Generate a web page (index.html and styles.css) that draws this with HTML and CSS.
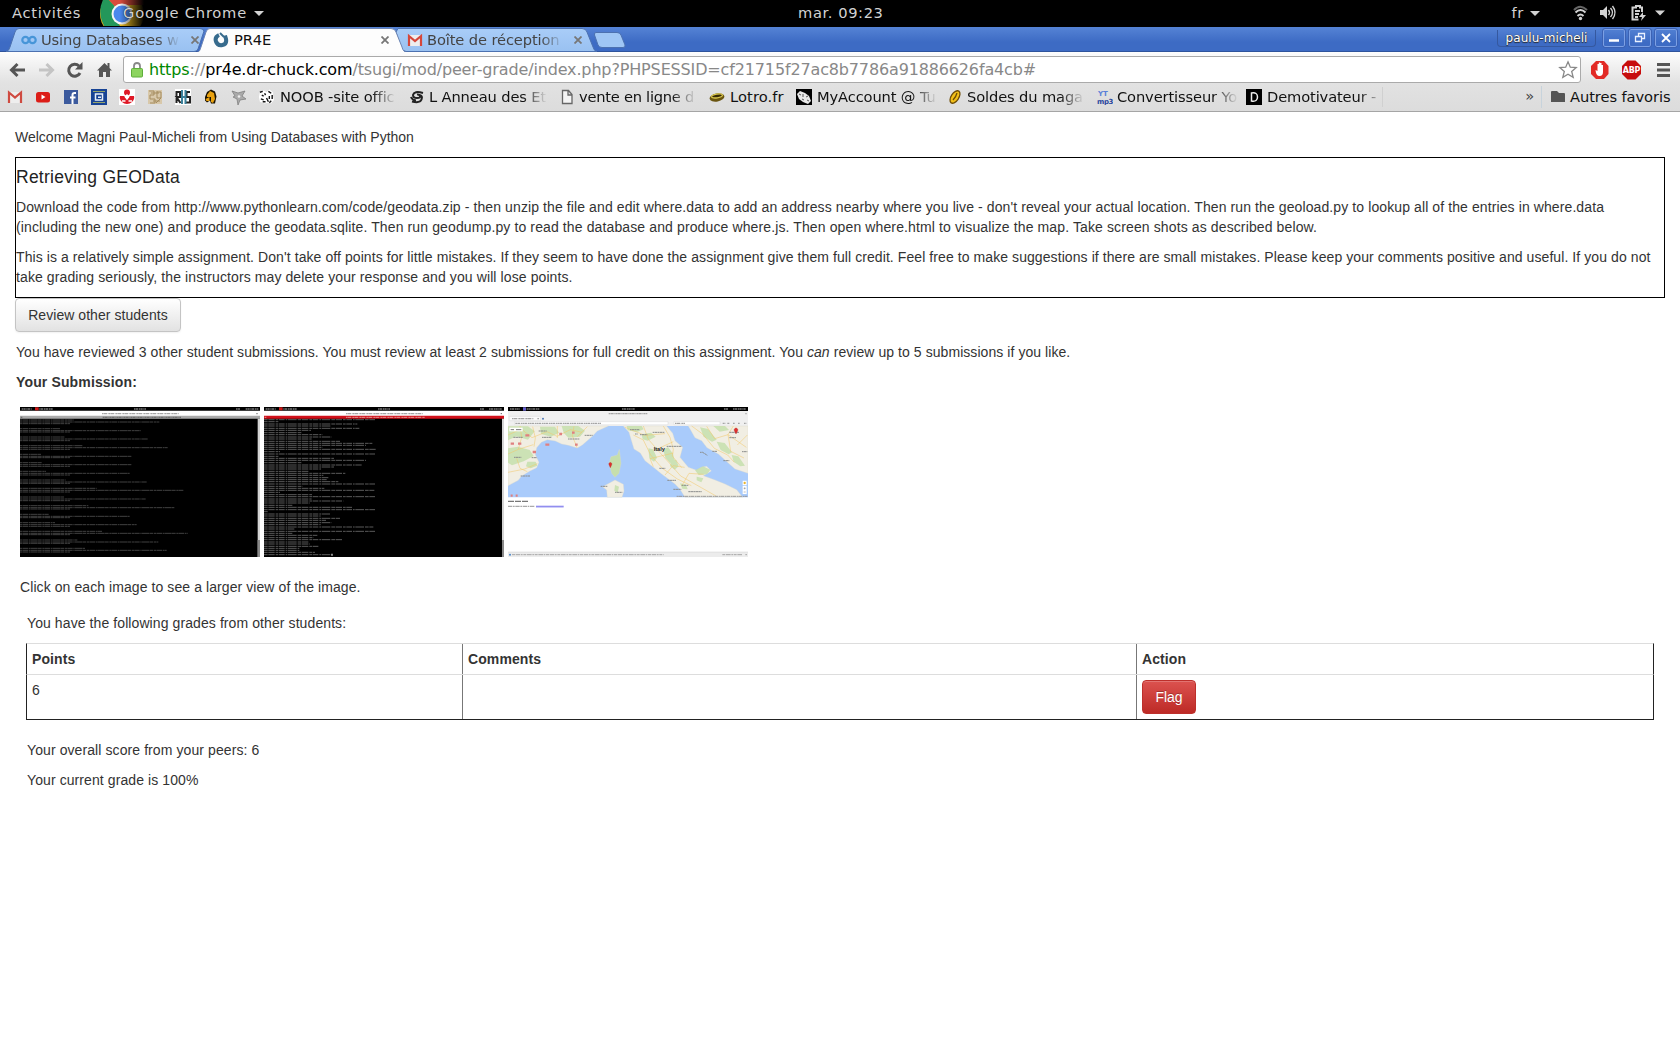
FILE: index.html
```html
<!DOCTYPE html>
<html lang="fr">
<head>
<meta charset="utf-8">
<title>PR4E</title>
<link rel="stylesheet" href="styles.css">
</head>
<body>
<header class="shell">
  <span class="act">Activités</span>
  <svg class="app-logo" width="44" height="26" viewBox="0 0 44 26"><defs><linearGradient id="fd"><stop offset=".45" stop-color="#000" stop-opacity="0"/><stop offset="1" stop-color="#000"/></linearGradient></defs><circle cx="22" cy="14" r="22" fill="#e8b820"/><path d="M22 14L5-4H44V5H22z" fill="#d94b3d"/><path d="M22 14L5-4Q-5 12 6 29H22L15 18z" fill="#23975a"/><circle cx="22" cy="14" r="10.500" fill="#f5f5f5"/><circle cx="22" cy="14" r="8.500" fill="#4b88ee"/><rect width="44" height="26" fill="url(#fd)"/></svg>
  <span class="app">Google Chrome</span><i class="tri"></i>
  <span class="clock">mar. 09:23</span>
  <span class="lang">fr</span><i class="tri"></i>
  <svg class="status" width="98" height="18" viewBox="0 0 98 18" fill="none" stroke="#d3d3d3" stroke-width="2"><path d="M2 6Q8-.5 15 6" stroke="#666"/><path d="M3.500 8.500Q8.500 3.500 13.500 8.500M5.500 12Q8.500 9 11.500 12"/><circle cx="8.500" cy="14.500" r="1.700" fill="#d3d3d3" stroke="none"/><path d="M28 6h3l4-4v13l-4-4h-3z" fill="#d3d3d3" stroke="none"/><path d="M36.500 6q2 2.500 0 5M38.500 4q4 4.500 0 9M40.500 2q5 6.500 0 13" stroke-width="1.400"/><path d="M70 8V3.500h-2V2h-4v1.500h-3.500v12h6M63 7h5M63 10h4M63 13h3"/><path d="M71 8l-4 5h3l-1 4 5-6h-3z" fill="#d3d3d3" stroke="none"/><path d="M83 6.500h10l-5 5z" fill="#d3d3d3" stroke="none"/></svg>
</header>

<nav class="tabs">
  <svg class="tab-shapes" width="640" height="25" viewBox="0 0 640 25"><defs><linearGradient id="tb" x2="0" y2="1"><stop stop-color="#a9cdf8"/><stop offset="1" stop-color="#99c1f1"/></linearGradient></defs>
    <path d="M6 24.500Q9 24 10 20L15 5Q16 1.500 19 1.500H200Q203 1.500 204 4L198 22Q197 24.500 194 24.500z" fill="url(#tb)" stroke="#4c71b0"/>
    <path d="M398 1.500H582Q586 1.500 587 5L593 20Q594 24 597 24.500H406Q402 24 401 20L396 5z" fill="url(#tb)" stroke="#4c71b0"/>
    <path d="M596 5.500H617Q620 5.500 621 8L625 18Q625.500 20.500 623 20.500H602Q599 20.500 598 18L594.500 8Q594 5.500 596 5.500z" fill="#9fc6f5" stroke="#4c71b0"/>
    <path d="M197 25.500Q200 25 201 20L206 5Q207 1.500 210 1.500H391Q395 1.500 396 5L402 20Q403 25 407 25.500z" fill="#fdfdfd" stroke="#6d86b5"/></svg>
  <div class="tab tab-a"><svg width="16" height="16" viewBox="0 0 16 16" fill="none" stroke="#4795d8" stroke-width="2.200"><circle cx="4.500" cy="8" r="3.200"/><circle cx="11.500" cy="8" r="3.200"/></svg><span class="fade">Using Databases w</span><svg class="x" width="8" height="8" viewBox="0 0 8 8"><path d="M.5.500l7 7M7.500.500l-7 7"/></svg></div>
  <div class="tab tab-b"><svg width="16" height="16" viewBox="0 0 16 16" fill="none" stroke="#376b8d" stroke-width="4"><path d="M6 3Q1.500 5 3 9.500t6.500 3.500Q14 12 13 7l-1-3.500"/><path d="M7 1l4 4" stroke-width="2"/></svg><span class="name">PR4E</span><svg class="x" width="8" height="8" viewBox="0 0 8 8"><path d="M.5.500l7 7M7.500.500l-7 7"/></svg></div>
  <div class="tab tab-c"><svg width="16" height="16" viewBox="0 0 16 16"><path d="M1 3h14v11H1z" fill="#eee"/><path d="M2 14V4l6 5 6-5v10" fill="none" stroke="#d5473b" stroke-width="2.200"/></svg><span class="fade">Boîte de réception</span><svg class="x" width="8" height="8" viewBox="0 0 8 8"><path d="M.5.500l7 7M7.500.500l-7 7"/></svg></div>
  <div class="user">paulu-micheli</div>
  <div class="win"><svg width="20" height="16" viewBox="0 0 20 16"><path d="M5 10.500h10" stroke="#fff" stroke-width="2.500"/></svg></div>
  <div class="win"><svg width="20" height="16" viewBox="0 0 20 16" fill="none" stroke="#eaf1ff" stroke-width="1.300"><path d="M5.500 6.500h6v5h-6zM8.500 6V3.500h6v5H12"/></svg></div>
  <div class="win"><svg width="20" height="16" viewBox="0 0 20 16" stroke="#fff" stroke-width="1.800"><path d="M6 4l8 8M14 4l-8 8"/></svg></div>
</nav>

<div class="chrome">
<div class="toolbar">
  <svg class="nav" width="112" height="20" viewBox="0 0 112 20" fill="none" stroke="#555" stroke-width="3"><path d="M25 10H12M17.500 4l-6 6 6 6"/><path d="M39 10h13M46.500 4l6 6-6 6" stroke="#c4c4c4"/><path d="M80 13A6 6 0 1 1 79 6"/><path d="M82.500 2v7.500H75z" fill="#555" stroke="none"/><path d="M97 10.500l7.500-7.500 3 3V3h2v5l2.500 2.500h-2V17h-4v-5h-3v5h-4v-6.500z" fill="#555" stroke="none"/></svg>
  <div class="url"><svg width="14" height="18" viewBox="0 0 14 18"><path d="M4 8V5q0-3 3-3t3 3v3" fill="none" stroke="#888" stroke-width="1.800"/><rect x="1.500" y="7.500" width="11" height="8.500" rx="1" fill="#8cd45f" stroke="#5fae3b"/></svg><span class="addr"><em>https</em>://<strong>pr4e.dr-chuck.com</strong>/tsugi/mod/peer-grade/index.php?PHPSESSID=cf21715f27ac8b7786a91886626fa4cb#</span>
  <svg class="star" width="20" height="20" viewBox="0 0 20 20"><path d="M10 1.800l2.300 5.400 5.900.4-4.500 3.800 1.500 5.900L10 14.200l-5.200 3.100 1.500-5.900L1.800 7.600l5.900-.4z" fill="#fff" stroke="#888" stroke-width="1.300"/></svg></div>
  <svg class="ext" width="90" height="22" viewBox="0 0 90 22"><path d="M6 2h8l4.500 5v8l-4.500 5H6l-5-5V7z" fill="#e22b26"/><path d="M5.500 11l2 1V5h1.300v5V3.500h1.400V10V4h1.300v6.500V6H13v7q0 4-3.500 4T5.500 11z" fill="#fff"/><path d="M37.500 1.500h8l5.500 5.500v8l-5.500 5.500h-8L32 15V7z" fill="#c70d0d"/><text x="41.500" y="14" text-anchor="middle" class="abp">ABP</text><path d="M67 5.500h13M67 11h13M67 16.500h13" stroke="#555" stroke-width="3"/></svg>
</div>

<div class="marks">
  <svg class="favs" width="258" height="18" viewBox="0 0 258 18"><path d="M8 4h14v11H8z" fill="#eee"/><path d="M9 15V4.500l6 5 6-5V15" fill="none" stroke="#cf4a40" stroke-width="2.200"/><rect x="36" y="4" width="14" height="10.500" rx="2.500" fill="#dc1d17"/><path d="M41.500 6.500v5l4-2.500z" fill="#fff"/><rect x="64" y="2" width="14" height="14" fill="#3c5a9d"/><path d="M76 5h-1.500q-2 0-2 2v9M70 9.500h5.500" fill="none" stroke="#fff" stroke-width="2"/><rect x="91" y="1" width="16" height="16" fill="#174394"/><path d="M93 3.500h12M93 14.500h12" stroke="#96a56d"/><path d="M95.500 6h7v6h-7z" fill="none" stroke="#e8eff8" stroke-width="1.500"/><path d="M98 8.500h3v1.500h-3z" fill="#e8eff8"/><rect x="119" y="1" width="16" height="16" fill="#fff"/><circle cx="127" cy="4.500" r="3" fill="#df1826"/><path d="M120 8h4l3 3 3-3h4q1 3-2 6-2 2-5 2t-5-2q-3-3-2-6z" fill="#df1826"/><path d="M127 7l1.500 2-1.500 2-1.500-2zM122 13h3.500M128.500 13h3.500" fill="#fff" stroke="#fff" stroke-width="1.400"/><rect x="148" y="2" width="14" height="14" fill="#d8c8aa"/><path d="M149 3h5v4h-4v4h5v4h-5M157 3v7h4M156 15l5-5M157 4h4v6M151 5h8M153 13h7" fill="none" stroke="#a58c5f"/><rect x="175" y="1" width="16" height="16" fill="#fff"/><path d="M176.500 15V4h3.500v5h-3.500l4 6M190 4h-3.500v5h3.500v5.500h-4" fill="none" stroke="#222" stroke-width="2"/><path d="M182 2v14M185.500 2v14M181 9h5" stroke="#3b819b" stroke-width="2"/><path d="M205 9l2-5 4-2.500 4 2 1.500 5-1.500 7h-4l-1-3-3 2-2-2z" fill="#1a1200"/><path d="M207 7l3-4 4 2 1 6-2 4-2-1v-5h-4zM205.500 11l4-2v4h-3z" fill="#e9a10f"/><path d="M232 3l6 2 7-2-3 5 4 3-6 1-2 5-1-6-4-2 2-1z" fill="#aaa" stroke="#808080" stroke-width=".8"/><circle cx="239" cy="8.500" r="1.300" fill="#eee"/></svg>
  <div class="mark m1"><svg width="17" height="16" viewBox="0 0 18 16"><path d="M2 3l4-2 3 2 3-3 4 3v4l1 4-3 4-4-1-3 1-5-2-1-5z" fill="#fff"/><path d="M2 3l3-1M7 4l1 2M4 6l2 1M11 2l3 2M12 7v3M15 6v4M3 10l3 1M9 9l2 4M14 12l-2 2M5 13h3" stroke="#111" stroke-width="1.500"/></svg><span class="fade">NOOB -site offic</span></div>
  <div class="mark m2"><svg width="16" height="16" viewBox="0 0 16 16" fill="none" stroke="#222" stroke-width="2"><path d="M14 4Q5 1.500 4 6q0 3 4 3t3-2-3-1.500M3 12.500q8 2 9.500-2 1.500-4-2-4.500M2 8q1 3 5 3.500"/></svg><span class="fade">L Anneau des Et</span></div>
  <div class="mark m3"><svg width="16" height="16" viewBox="0 0 16 16" fill="#f4f4f4" stroke="#666" stroke-width="1.300"><path d="M3.500 1.500h6l3.500 4v9H3.500zM9 2v4h4"/></svg><span class="fade">vente en ligne d</span></div>
  <div class="mark m4"><svg width="16" height="16" viewBox="0 0 16 16"><ellipse cx="8" cy="8.500" rx="7.500" ry="4" fill="#6a5510" transform="rotate(-10 8 8.500)"/><ellipse cx="8" cy="7" rx="5.500" ry="1.800" fill="#382b05" stroke="#d8c54c" stroke-width="1.300" transform="rotate(-10 8 7)"/></svg><span class="name">Lotro.fr</span></div>
  <div class="mark m5"><svg width="16" height="16" viewBox="0 0 16 16"><path d="M0 0h16v16H0z"/><path d="M1 5l3-3 5 2 4 3 2 5-3 3-5-2-4-3z" fill="#e8e8e8"/><path d="M3 5l2 1M7 5v3M10 8l2-1M6 10l2 1M11 11l2 1" stroke="#555"/></svg><span class="fade">MyAccount @ Tu</span></div>
  <div class="mark m6"><svg width="16" height="16" viewBox="0 0 16 16"><ellipse cx="8" cy="8" rx="3.800" ry="7" transform="rotate(33 8 8)" fill="#f3c018" stroke="#6e4c05" stroke-width="1.300"/><path d="M6 11q3-3 4-7" stroke="#6e4c05" stroke-width="1.300" fill="none"/></svg><span class="fade">Soldes du maga</span></div>
  <div class="mark m7"><svg width="16" height="16" viewBox="0 0 16 16"><text x="1" y="6.500" class="ytt">YT</text><text x="0" y="14.500" class="mp3">mp3</text></svg><span class="fade">Convertisseur Yo</span></div>
  <div class="mark m8"><svg width="16" height="16" viewBox="0 0 16 16"><path d="M0 0h16v16H0z"/><path d="M5.500 4v8q6 1 6-4t-6-4z" fill="none" stroke="#eee" stroke-width="1.500"/></svg><span class="fade">Demotivateur -</span></div>
  <span class="more">»</span>
  <div class="mark other"><svg width="16" height="16" viewBox="0 0 16 16"><path d="M1 3q0-1 1-1h5l2 2h5q1 0 1 1v8H1z" fill="#555"/></svg><span class="name">Autres favoris</span></div>
</div>
</div>

<main class="page">
  <p class="welcome">Welcome Magni Paul-Micheli from Using Databases with Python</p>
  <section class="brief">
    <h4>Retrieving GEOData</h4>
    <p>Download the code from http://www.pythonlearn.com/code/geodata.zip - then unzip the file and edit where.data to add an address nearby where you live - don't reveal your actual location. Then run the geoload.py to lookup all of the entries in where.data<br><span class="wide">(including the new one) and produce the geodata.sqlite. Then run geodump.py to read the database and produce where.js. Then open where.html to visualize the map. Take screen shots as described below.</span></p>
    <p><span class="snug">This is a relatively simple assignment. Don't take off points for little mistakes. If they seem to have done the assignment give them full credit. Feel free to make suggestions if there are small mistakes. Please keep your comments positive and useful. If you do not</span><br>take grading seriously, the instructors may delete your response and you will lose points.</p>
  </section>
  <button class="btn">Review other students</button>
  <p class="reviewed">You have reviewed 3 other student submissions. You must review at least 2 submissions for full credit on this assignment. You <i>can</i> review up to 5 submissions if you like.</p>
  <p class="bold">Your Submission:</p>
  <div class="shots">
    <svg width="240" height="150" viewBox="60 36 720 450">
      <path d="M60 36h720v450H60z"/><path d="M60 47h720v16H60z" fill="#fff"/><path d="M60 62h720v9H60z" fill="#aaa"/><path d="M773 71h7v415h-7z" fill="#d5d5d5"/><path d="M773 435h7v51h-7z" fill="#8a8a8a"/>
      <path d="M105 37h11v9h-11z" fill="#d01818"/><path class="bar" d="M65 42h30M118 42h40M402 42h36M708 42h12M737 42h38"/><path class="title" d="M306 56h230"/><path class="title dark" d="M308 67h235M62 67h6"/><path d="M769 56h4" stroke="#666" stroke-width="3"/>
      <g class="term"><path d="M60 75H222M60 81H478M60 86H210M60 101H180M60 107H423M60 111H210M60 126H195M60 132H443M60 137H210M60 152H247M60 158H503M60 163H210M60 178H123M60 184H396M60 188H210M60 203H125M60 209H396M60 214H210M60 229H138M60 235H389M60 240H210M60 255H197M60 261H440M60 265H210M60 280H290M60 286H550M60 291H210M60 306H193M60 312H437M60 317H210M60 332H265M60 338H523M60 342H210M60 358H146M60 364H389M60 368H210M60 383H165M60 389H410M60 394H210M60 409H306M60 415H563M60 419H210M60 435H232M60 441H475M60 445H210M60 460H255M60 466H500M60 471H210"/></g>
    </svg>
    <svg width="240" height="150" viewBox="12 36 720 450">
      <path d="M12 36h720v450H12z"/><path d="M12 47h720v16H12z" fill="#fff"/><path d="M12 62h720v9H12z" fill="#d0101a"/><path d="M726 71h6v415h-6z" fill="#d5d5d5"/><path d="M726 435h6v51h-6z" fill="#8a8a8a"/>
      <path d="M57 37h11v9H57z" fill="#d01818"/><path class="bar" d="M17 42h30M70 42h40M354 42h36M660 42h12M687 42h38"/><path class="title" d="M258 56h230"/><path class="title red" d="M258 67h237M14 67h6"/><path d="M722 56h4" stroke="#666" stroke-width="3"/>
      <g class="term log"><path d="M12 74H345M12 80H55M12 87H292M12 93H213M12 100H298M12 106H153M12 113H125M12 119H187M12 126H215M12 132H155M12 139H240M12 145H337M12 151H318M12 157H187M12 163H347M12 170H60M12 177H345M12 184H57M12 190H222M12 196H318M12 203H125M12 210H305M12 216H222M12 222H185M12 229H145M12 235H256M12 241H190M12 248H205M12 254H200M12 260H235M12 267H345M12 274H127M12 280H193M12 286H343M12 292H60M12 299H158M12 305H345M12 312H155M12 318H250M12 324H150M12 331H97M12 337H277M12 344H345M12 350H25M12 357H210M12 363H182M12 370H240M12 376H198M12 383H215M12 389H182M12 396H340M12 402H103M12 409H345M12 415H97M12 421H172M12 428H160M12 434H246M12 441H145M12 447H150M12 454H178M12 460H118M12 466H118M12 472H165M12 479H215"/></g><path d="M214 476h4v6h-4z" fill="#ccc"/>
    </svg>
    <svg width="240" height="150" viewBox="24 36 720 450">
      <path d="M24 36h720v450H24z" fill="#fff"/><path d="M24 36h720v12H24z"/><path d="M24 48h720v45H24z" fill="#f0f0f0"/><path d="M28 64h94v13H28z" fill="#fafafa" stroke="#ccc"/><path d="M44 80h460v9H44zM522 80h138v9H522z" fill="#fff" stroke="#ccc"/>
      <path d="M69 37h9v10h-9z" fill="#6660d0"/><path class="bar" d="M30 42h30M80 42h38M366 42h38M672 42h12M699 42h38"/><path class="title" d="M326 56h116M36 71h64M46 85h258M525 85h30M668 85h8M682 85h7M699 85h6M714 85h6M732 85h7M736 56h4M112 71h5"/><circle cx="129" cy="71" r="3" fill="#4d78b5"/>
      <path d="M24 93h720v214H24z" fill="#a9cbfb"/>
      <g fill="#f1eee3" stroke="#dedccb"><path d="M24 93H325L292 108 277 124 247 150 232 159 205 151 185 147 166 138 142 134 124 142 110 158 106 179 117 202 110 218 90 228 64 244 55 256 24 272z"/><path d="M370 93H500L518 115 525 137 548 157 540 187 565 217 590 226 605 217 620 214 634 228 610 242 643 254 675 267 710 284 728 307H555L540 283 525 267 485 237 462 218 435 197 421 174 402 162 394 136 387 112z"/><path d="M565 93H744V235L705 222 679 199 655 177 621 158 605 137 585 128z"/><path d="M358 163l-6 17-19 5-6 20 8 30 10 12 12-12 6-30z" fill="#c6dfad"/><path d="M345 255l25 13 2 20-6 19H322l-2-22-12-10z"/></g>
      <g fill="#c6dfad" opacity=".85"><path d="M24 94h60l20 15-20 25-35-10-25 12zM120 95h45l12 18-24 12-30-8zM185 93h50l20 14-15 18-35 3-14-15zM24 160l30-5 35 10 12 18-30 16-35 12-12-8zM82 200h25l5 12-20 8-14-6zM380 93h45l6 10-20 8-28-5zM425 118l28-5 14 12-24 12-15-4zM445 160l14 3 12 25-9 12-14-10zM490 165l14-9 15 20 5 22-14 6-14-16zM515 190l14 6 7 18-12 10-14-11zM585 226l24-12 22 10-10 14-25 2zM600 97l24 5 26 32-14 6-25-15zM650 140l24 4 22 28-10 6-24-13zM695 180l20 4 20 28-14 2-20-14zM540 265l18 4 5 14-16-2zM590 245l20 5-6 12-14-6zM640 93h35l12 12-28 5zM345 270l12 5-4 18-10-6z"/></g>
      <g fill="none" stroke="#f1c96c" stroke-width="1.600"><path d="M24 120l40-18 32 26 45-18 30 14 40-20 35 8M60 93l5 34-10 36-31 14M55 163l45-14M98 95l8 34-4 26M172 93v36M222 94l-5 28 14 36M262 95l-30 30M24 232l50-10 38-16M50 190l10 30 22 10M375 97l60 24 60-5M400 120l30 15 22 45 35 40 45 32 42 20M430 93l15 40 35 40 27 30 35 40 62 35 44 25M520 140l-55 25M490 93l20 34 10 36-3 20 28 35M460 215l-10-24 70-17M495 240l24-28 35 5M545 273l22-38 44 3M575 93l34 25 34 42 40 20 20 22M620 94l24 37 40-12 55 38M700 93l-16 26 8 50 40 20M742 120l-30 30"/></g>
      <path d="M76 121h12M178 117h8M216 113h8M32 146h10M54 146h10M98 171h10M136 149h12M225 149h8M32 302h6M47 302h6" stroke="#e08080" stroke-width="7"/>
      <path d="M40 127h28M126 127h28M116 108h24M42 187h22M95 188h16M62 243h28M204 132h34M254 121h24M390 104h28M420 119h22M458 112h36M405 117h8M500 154h44M478 220h18M545 271h20M565 290h40M688 112h30M688 128h20M637 169h14M726 170h16M302 274h20M345 292h22M502 256h26M520 283h24M670 197h18M600 172h8l14 9" stroke="#8b8d8c" stroke-width="3" stroke-dasharray="5 1 8 1" fill="none"/>
      <text x="461" y="167" class="italy">Italy</text>
      <path d="M28 98h40v11H28z" fill="#fff"/><path d="M32 104h10M48 104h16" stroke="#777" stroke-width="3"/>
      <path d="M331 218l-4-9a4.500 4.500 0 1 1 8 0zM708 117l-5-10a5.500 5.500 0 1 1 10 0z" fill="#df302e" stroke="#a92020"/>
      <path d="M728 257h12v14h-12zM728 273h12v24h-12z" fill="#fff"/><circle cx="734" cy="264" r="3.500" fill="#e9b32e"/><path d="M731 280h6M734 277v6M731 291h6" stroke="#777" stroke-width="1.500"/><path d="M530 304h212" stroke="#999" stroke-width="3" stroke-dasharray="6 1 9 2"/>
      <path d="M24 319h62" stroke="#777" stroke-width="4" stroke-dasharray="18 3"/><path d="M24 334h80" stroke="#aaa" stroke-width="3.500" stroke-dasharray="13 2 5 2"/><path d="M108 334h83" stroke="#9794f0" stroke-width="4"/><path d="M108 337h83" stroke="#4a45e8"/>
      <path d="M24 471h720v15H24z" fill="#ececec"/><path d="M24 471h720" stroke="#bbb"/><circle cx="30" cy="479" r="3" fill="#4a87cb"/><path d="M36 479h455M667 479h60M736 479h5" stroke="#a8a8a8" stroke-width="3" stroke-dasharray="9 2 14 2 5 2"/>
    </svg>
  </div>
  <p class="click">Click on each image to see a larger view of the image.</p>
  <section class="grades">
    <p>You have the following grades from other students:</p>
    <div class="grid">
      <div class="row head"><b>Points</b><b>Comments</b><b>Action</b></div>
      <div class="row body"><span>6</span><span></span><span><button class="btn flag">Flag</button></span></div>
    </div>
    <p>Your overall score from your peers: 6</p>
    <p class="last">Your current grade is 100%</p>
  </section>
</main>
</body>
</html>
```
FILE: styles.css
```css
* { box-sizing: border-box; }
body { margin: 0; width: 1680px; height: 1050px; overflow: hidden; background: #fff; color: #333; font: 14px/20px "Liberation Sans", Arial, sans-serif; }
svg { display: block; flex: none; }
p, h4 { margin: 0; white-space: nowrap; }

.shell, .tabs, .toolbar, .marks { display: flex; align-items: center; font-family: "DejaVu Sans", sans-serif; white-space: nowrap; }
.shell { height: 27px; background: #000; color: #d3d3d3; font-size: 14.67px; letter-spacing: .7px; padding-bottom: 1px; }
.act { width: 100px; padding-left: 12px; }
.app { width: 124px; margin-left: -21px; text-shadow: 0 0 1px #000; letter-spacing: .78px; }
.tri { border: 5px solid transparent; border-top-color: #d3d3d3; border-bottom: 0; margin-left: 7px; }
.clock { margin-left: 534px; letter-spacing: .6px; }
.lang { margin-left: auto; }
.lang + .tri { margin-left: 6px; }
.status { margin: 0 10px 0 32px; }

.tabs { position: relative; height: 25px; padding-right: 3px; background: linear-gradient(#5583d5, #3d6bc4 60%, #3d6bc4); box-shadow: inset 0 -1px #2f549c; letter-spacing: -.12px; }
.tab-shapes { position: absolute; left: 0; top: 0; }
.tab { position: relative; display: flex; align-items: center; width: 175px; margin-right: 17px; font-size: 14.67px; color: #444; line-height: 24px; }
.tab .fade, .tab .name { flex: 1; margin-left: 4px; margin-right: 12px; }
.tab .fade { -webkit-mask-image: linear-gradient(90deg, #000 84%, transparent 101%); mask-image: linear-gradient(90deg, #000 84%, transparent 101%); }
.tab-a { margin-left: 21px; }
.tab-b { width: 176px; margin-right: 18px; color: #111; }
.tab-b .name { margin-left: 5px; }
.x { fill: none; stroke: #777; stroke-width: 1.8px; }
.user { margin-left: auto; margin-right: 3px; width: 99px; height: 17px; border: 1px solid #35589f; border-top: 0; border-radius: 0 0 4px 4px; font-size: 12px; line-height: 17px; text-align: center; color: #fff; text-shadow: 0 1px 1px #222, 0 0 1px #222; letter-spacing: .06px; margin-bottom: 3px; }
.win { border: 1px solid #7ca0e4; outline: 1px solid #3c62b4; margin-left: 4px; margin-bottom: 3px; border-radius: 2px; }

.chrome { height: 60px; background: linear-gradient(#fdfdfd, #e2e2e2 52%, #dcdcdc); border-bottom: 1px solid #a5a5a5; }
.toolbar { height: 31px; padding-top: 4px; }
.nav { margin-top: 1px; }
.url { display: flex; align-items: center; width: 1458px; height: 27px; border: 1px solid #aaa; border-radius: 3px; background: #fff; margin-left: 11px; padding: 0 2px 0 6px; }
.addr { margin-left: 5px; font-size: 16px; color: #888; letter-spacing: -.146px; }
.addr em { font-style: normal; color: #080; }
.addr strong { font-weight: 400; color: #000; }
.star { margin-left: auto; }
.ext { margin-left: 9px; }
.abp { font: bold 8px "DejaVu Sans", sans-serif; fill: #fff; letter-spacing: -.2px; }

.marks { height: 28px; font-size: 14.67px; color: #111; letter-spacing: -.13px; }
.mark { display: flex; align-items: center; gap: 4px; }
.mark .fade { flex: 1; -webkit-mask-image: linear-gradient(90deg, #000 80%, transparent 101%); mask-image: linear-gradient(90deg, #000 80%, transparent 101%); }
.m1 { width: 137px; gap: 5px; }
.m2 { width: 137px; margin-left: 14px; }
.m3 { width: 136px; margin-left: 13px; letter-spacing: -.25px; }
.m4 { width: 76px; margin-left: 14px; gap: 5px; letter-spacing: .1px; }
.m5 { width: 137px; margin-left: 11px; gap: 5px; }
.m6 { width: 136px; margin-left: 14px; }
.m7 { width: 136px; margin-left: 14px; }
.m8 { width: 137px; margin-left: 13px; gap: 5px; border-right: 1px solid #d0d0d0; }
.ytt, .mp3 { font: bold 7px "DejaVu Sans", sans-serif; fill: #5a7fd8; letter-spacing: 0; }
.mp3 { fill: #2a479f; letter-spacing: -.4px; }
.more { margin-left: auto; margin-right: 7px; color: #444; padding-bottom: 2px; }
.other { width: 139px; border-left: 1px solid #c7d3dc; padding-left: 8px; height: 22px; letter-spacing: -.08px; }

.page { padding: 16px 15px 0; letter-spacing: .09px; }
.welcome { margin-top: -1px; letter-spacing: 0; }
.brief { margin-top: 10px; border: 1px solid #000; height: 141px; }
.brief p { margin-top: 10px; letter-spacing: .1px; }
.brief .wide { letter-spacing: .12px; }
.brief .snug { letter-spacing: .08px; }
h4 { margin-top: 9px; font-size: 17.5px; font-weight: 400; letter-spacing: .25px; color: #222; }
.btn { display: block; width: 166px; height: 34px; padding: 0; border: 1px solid #c4c4c4; border-radius: 4px; background: linear-gradient(#fff, #e2e2e2); box-shadow: 0 1px 2px rgba(0,0,0,.06); font: inherit; letter-spacing: .05px; color: #333; }
.reviewed { margin: 10px 0 0 1px; letter-spacing: .062px; }
.bold { margin: 10px 0 0 1px; font-weight: 700; letter-spacing: .14px; }
.shots { display: flex; gap: 4px; margin: 15px 0 0 5px; }
.bar { stroke: #777; stroke-width: 4px; stroke-dasharray: 4 1 7 2; }
.title { stroke: #a5a5a5; stroke-width: 4px; stroke-dasharray: 5 1 9 2 3 1; }
.title.dark { stroke: #707070; }
.title.red { stroke: #e27a7a; }
.term { stroke: #4a4a4a; stroke-width: 2.6px; stroke-dasharray: 7 1 16 2 4 1 22 1 11 2; }
.log { stroke: #5a5a5a; stroke-width: 3px; stroke-dasharray: 11 2 19 3 8 2 17 3 5 2 26 3; }
.italy { font: bold 17px "Liberation Sans", Arial, sans-serif; fill: #222; letter-spacing: 0; }
.click { margin: 20px 0 0 5px; letter-spacing: .08px; }
.grades { margin: 16px 11px 0; }
.grades > p { padding-left: 1px; }
.grid { margin-top: 10px; border-bottom: 1px solid #222; }
.row { display: grid; grid-template-columns: 435px 674px 1fr; border: 1px solid #222; border-top-color: #ddd; border-bottom: 0; }
.row > * { padding: 5px; border-left: 1px solid #777; }
.row > :first-child { border-left: 0; }
.head { height: 31px; }
.body { height: 45px; }
.flag { width: 54px; border-color: #bd2f2b; background: linear-gradient(#dc524f, #bd2a26); color: #fff; text-shadow: 0 -1px rgba(0,0,0,.25); box-shadow: inset 0 1px rgba(255,255,255,.2); letter-spacing: 0; }
.grades .grid + p { margin-top: 20px; }
.last { margin-top: 10px; }
```
